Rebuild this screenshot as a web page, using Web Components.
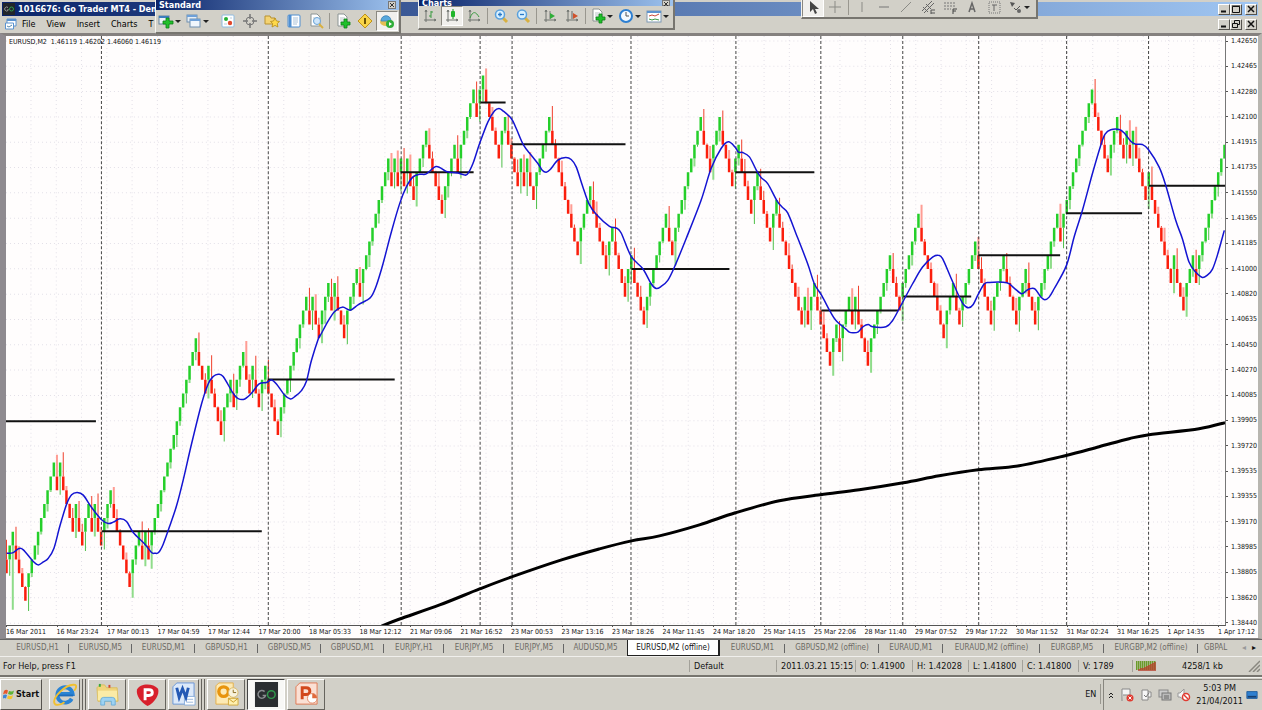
<!DOCTYPE html>
<html lang="en">
<head>
<meta charset="utf-8">
<title>Go Trader MT4</title>
<style>
html,body{margin:0;height:100%}
body{font-family:"DejaVu Sans Condensed","DejaVu Sans",sans-serif;font-size:8px;color:#111;background:#d2d0c8;overflow:hidden}
</style>
</head>
<body>
<trade-desktop></trade-desktop>
<script>
const define = (name, html, setup) => customElements.define(name, class extends HTMLElement {
  constructor() {
    super();
    const t = document.createElement('template');
    t.innerHTML = html;
    this.attachShadow({ mode: 'open' }).append(t.content.cloneNode(true));
  }
  connectedCallback() { if (setup && !this.ready) { this.ready = true; setup(this, this.shadowRoot); } }
});

const DOC = '<path d="M3 1h6l3 3v9H3z" fill="#fff" stroke="#8b9494"/><path d="M5 5h5M5 7h5M5 9h4" stroke="#b9c4c8"/>';
const PLUS = '<path d="M9 6h3v3h3v3h-3v3H9v-3H6V9h3z" fill="#1fc02a" stroke="#0c8216" stroke-width=".8"/>';
const AXES = '<path d="M4 2v12M2 12h12M3 4l1-2 1 2M12 11l2 1-2 1" fill="none" stroke="#6f736f"/>';
const LENS = '<path d="M10 10l4 4" stroke="#d8b040" stroke-width="3"/><circle cx="7" cy="6.5" r="4.5" fill="#d8f0ff" stroke="#5aa0dc" stroke-width="1.5"/>';
const ICONS = {
  newchart: '<rect x="1" y="3" width="10" height="8" fill="#eef4f8" stroke="#67839b"/><path d="M1 4h10" stroke="#3e7fc0" stroke-width="2"/><path d="M8 5h3v3h4v3h-4v4H8v-4H5V8h3z" fill="#22c02c" stroke="#0c8216" stroke-width=".8"/>',
  profiles: '<rect x="1" y="2" width="10" height="7" fill="#e6eef6" stroke="#6f8fb0"/><path d="M1 3h10" stroke="#6ea0d8" stroke-width="2"/><rect x="4" y="6" width="10" height="8" fill="#f0f6fc" stroke="#6f8fb0"/><path d="M4 7h10" stroke="#6ea0d8" stroke-width="2"/>',
  watch: '<rect x="2" y="2" width="12" height="12" rx="1" fill="#fff" stroke="#8ebbe0"/><circle cx="6" cy="6" r="2" fill="#25b035"/><circle cx="10" cy="10" r="2.2" fill="#e0482c"/><path d="M4 11h3M10 5h2" stroke="#bcd"/>',
  target: '<circle cx="8" cy="8" r="4" fill="none" stroke="#777"/><path d="M8 1v5M8 10v5M1 8h5M10 8h5" stroke="#777" stroke-width="1.5"/>',
  favs: '<path d="M1 3h5l1 2h4v6H1z" fill="#f4d372" stroke="#b89230"/><path d="M11 5l1.5 3 3 .5-2.2 2 .6 3.5-2.900-1.600L8 14l.7-3.500-2.200-2 3-.5z" fill="#ffd94a" stroke="#b48a18" stroke-width=".8"/>',
  terminal: '<rect x="2" y="2" width="12" height="12" rx="1" fill="#fff" stroke="#4f8ed0"/><path d="M4 2v12" stroke="#4f8ed0" stroke-width="3"/><path d="M7 5h5M7 7h5M7 9h5M7 11h4" stroke="#a9c1d8"/>',
  tester: DOC + '<circle cx="9" cy="8" r="3.5" fill="#cfe6fa" stroke="#6aa4d8"/><path d="M11 11l4 4" stroke="#d8b040" stroke-width="2"/>',
  order: DOC + PLUS,
  meta: '<path d="M8 1l7 7-7 7-7-7z" fill="#f9d448" stroke="#bf9218"/><path d="M8 5v6" stroke="#6b5206" stroke-width="2"/>',
  expert: '<ellipse cx="7" cy="9" rx="6" ry="4" fill="#e4be52"/><path d="M2 8c0-7 10-7 10 0z" fill="#58a8dc" stroke="#3c80b4" stroke-width=".8"/><circle cx="11" cy="11" r="4" fill="#2fae38"/><path d="M10 9l3 2-3 2z" fill="#fff"/>',
  bars: AXES + '<path d="M9 3v7M7 8h2M9 4h2" stroke="#3a9a40" fill="none"/>',
  candles: AXES + '<path d="M9 1v10" stroke="#168c20"/><rect x="7" y="3" width="4" height="6" rx="1" fill="#1fb52b"/>',
  line: AXES + '<path d="M4 10c3-8 6-6 9-1" stroke="#3a9a40" fill="none"/>',
  zoomin: LENS + '<path d="M5 6.5h4M7 4.5v4" stroke="#2878c8" stroke-width="1.3"/>',
  zoomout: LENS + '<path d="M5 6.5h4" stroke="#2878c8" stroke-width="1.3"/>',
  scroll: AXES + '<path d="M8 3v8" stroke="#777"/><path d="M8 5l5 3-5 3z" fill="#2fae38"/>',
  shift: AXES + '<path d="M8 3v8" stroke="#666"/><path d="M9 5l5 3-5 3z" fill="#d0522c"/>',
  indicator: DOC + PLUS,
  clock: '<circle cx="8" cy="8" r="6" fill="#f4faff" stroke="#2d7fd2" stroke-width="2"/><path d="M8 4v4h3" fill="none" stroke="#555"/>',
  template: '<rect x="1" y="3" width="14" height="11" fill="#fff" stroke="#7c98b4"/><path d="M1 4h14" stroke="#5c94d0" stroke-width="2"/><path d="M3 8l3-1 3 1 4-2" stroke="#c84a3a" fill="none"/><path d="M3 11l3 1 3-1 4 1" stroke="#3a9a40" fill="none"/>',
  cursor: '<path d="M5 2v11l3-3 2 5 2-1-2-4h4z" fill="#444"/>',
  cross: '<path d="M8 2v12M2 8h12" stroke="#8b8b86"/>',
  vline: '<path d="M8 3v10" stroke="#8b8b86"/>',
  hline: '<path d="M3 8h10" stroke="#777"/>',
  trend: '<path d="M3 13L13 3" stroke="#8b8b86"/>',
  channel: '<path d="M2 12L12 2M4 14L14 4M3 8l5 5M6 5l5 5" stroke="#666"/><path d="M11 11h4M11 14h4M11 11v4" stroke="#555"/>',
  fibo: '<path d="M2 4h12M2 7h12M2 10h7" stroke="#777" stroke-dasharray="2 1"/><path d="M11 10h4M11 12h3M11 10v5" stroke="#444"/>',
  text: '<path d="M5 13L8 4l3 9M6 10h4" fill="none" stroke="#666" stroke-width="1.5"/>',
  label: '<rect x="3" y="3" width="11" height="11" fill="none" stroke="#777" stroke-dasharray="1 1"/><path d="M6 6h5M8 6v6" stroke="#666"/>',
  arrows: '<path d="M3 3l5 1-3 4z" fill="#555"/><path d="M7 9l2 2 4-4" fill="none" stroke="#555"/><circle cx="12" cy="12" r="2" fill="#666"/>'
};

/* Floating tool bar: data-items lists icon names; "|" is a divider, "_" a gap, "*" pressed, "+" has a menu */
define('tool-bar', `<style>
:host{display:block;box-sizing:border-box;background:#d2d0c8;border:solid;border-width:0 2px 2px 1px;border-color:#f4f4f0 #77756f #77756f #f4f4f0;overflow:hidden}
header{display:flex;align-items:center;justify-content:space-between;height:10px;padding:0 3px;background:linear-gradient(90deg,#0a246a,#9dc2ee);color:#fff;font:bold 9px/10px "DejaVu Sans Condensed",sans-serif}
header button{width:8px;height:8px;padding:0;border:1px solid #777;background:#d2d0c8;display:grid;place-items:center}
header svg{width:6px;height:6px;fill:none;stroke:#333}
:host([slim]) header{height:6px;line-height:6px}
:host([slim]) header span{line-height:6px}
:host([slim]) header button{height:6px}
:host(:not([caption])) header{display:none}
nav{display:flex;align-items:center}
nav button{display:flex;align-items:center;width:22px;height:20px;padding:0 2px;border:1px solid transparent;background:none}
nav button.menu{width:28px;padding:0 1px}
nav button.on{background:#f1f0ed;border-color:#8a8880 #fff #fff #8a8880}
nav button.menu::after{content:"";border:solid transparent;border-width:3px 3px 0;border-top-color:#222;margin-left:1px}
:host(:not([slim])[caption]) nav{padding-top:1px}
svg{width:16px;height:16px;flex:none}
i{width:1px;height:16px;margin:0 2px;background:#99978f}
i.gap{background:none}
</style><header><span></span><button aria-label="Close"><svg viewBox="0 0 6 6"><path d="M1 1l4 4M5 1L1 5"/></svg></button></header><nav></nav>`, (el, root) => {
  root.querySelector('span').textContent = el.getAttribute('caption') || '';
  root.querySelector('nav').innerHTML = el.dataset.items.split(' ').map(t => {
    if (t === '|') return '<i></i>';
    if (t === '_') return '<i class="gap"></i>';
    const key = t.replace(/[*+]/, '');
    return `<button class="${t.includes('*') ? 'on' : ''} ${t.includes('+') ? 'menu' : ''}" aria-label="${key}"><svg viewBox="0 0 16 16">${ICONS[key]}</svg></button>`;
  }).join('');
});

define('window-buttons', `<style>
:host{display:flex;margin-left:auto;margin-right:5px}
button{width:12px;height:11px;padding:0;border:1px solid;border-color:#fff #55534e #55534e #fff;background:#d2d0c8;display:grid;place-items:center}
button:last-child{margin-left:3px}
svg{width:8px;height:8px;fill:none;stroke:#111}
</style>
<button aria-label="Minimize"><svg viewBox="0 0 8 8"><path d="M1 6.5h5" stroke-width="2"/></svg></button>
<button aria-label="Maximize"><svg viewBox="0 0 8 8"><path class="box" d="M.5 1.5h7v6h-7zM0 1h8"/></svg></button>
<button aria-label="Close"><svg viewBox="0 0 8 8"><path d="M1 1l6 6M7 1L1 7" stroke-width="1.5"/></svg></button>`, (el, root) => {
  if (el.hasAttribute('restore')) root.querySelector('.box').setAttribute('d', 'M2.5 3V.5h5v4H6M.5 3.5h5v4h-5z');
});

define('price-chart', `<style>
:host{display:grid;grid-template-columns:1fr 32px;grid-template-rows:1fr 12px;background:#fffdfd;border:solid #85817f;border-width:3px 4px 1px 6px;border-left-color:#8f8b90;border-right-color:#b8b6b0;min-height:0;position:relative}
.plot{width:100%;height:100%;min-height:0;box-sizing:border-box;border-right:1px solid #777;border-bottom:1px solid #555;display:block;overflow:hidden}
.plot svg{display:block;width:100%;height:100%}
.quote{position:absolute;left:3px;top:1px;font-size:7px;line-height:11px;white-space:pre}
ol{list-style:none;margin:0;padding:0;font-size:7px;line-height:10px}
.prices{display:flex;flex-direction:column;justify-content:space-between;margin-bottom:-2px}
.prices li{display:flex;align-items:center}
.prices li::before{content:"";width:2px;height:1px;background:#555;margin-right:3px}
.times{grid-column:1/-1;display:grid;grid-template-columns:repeat(24,minmax(0,1fr)) 40px;white-space:nowrap;line-height:11px}
.times li::before{content:"";display:block;width:1px;height:2px;background:#555}
.times li{margin-top:-1px}
</style>
<div class="plot"><svg viewBox="0 0 1220 588" preserveAspectRatio="none"></svg></div>
<ol class="prices"></ol><ol class="times"></ol>
<span class="quote">EURUSD,M2  1.46119 1.46202 1.46060 1.46119</span>`, (el, root) => {
  const li = a => a.split(',').map(t => `<li>${t}</li>`).join('');
  root.querySelector('.prices').innerHTML = li('1.42650,1.42465,1.42280,1.42100,1.41915,1.41735,1.41550,1.41365,1.41185,1.41000,1.40820,1.40635,1.40450,1.40270,1.40085,1.39905,1.39720,1.39535,1.39355,1.39170,1.38985,1.38805,1.38620,1.38440');
  root.querySelector('.times').innerHTML = li('16 Mar 2011,16 Mar 23:24,17 Mar 00:13,17 Mar 04:59,17 Mar 12:44,17 Mar 20:00,18 Mar 05:33,18 Mar 12:12,21 Mar 09:06,21 Mar 16:52,23 Mar 00:53,23 Mar 13:16,23 Mar 18:26,24 Mar 11:45,24 Mar 18:20,25 Mar 14:15,25 Mar 22:06,28 Mar 11:40,29 Mar 07:52,29 Mar 17:22,30 Mar 11:52,31 Mar 02:24,31 Mar 16:25,1 Apr 14:35,1 Apr 17:12');

  // Successive highs and lows of the price, in bricks of 0.001 above 1.38
  const turns = [10,8,11,6,16,14,16,11,13,10,13,11,13,10,14,7,11,9,11,9,25,21,23,18,22,20,24,21,23,20,23,18,28,26,28,25,29,27,29,25,30,28,38,36,38,36,38,36,38,35,40,34,39,37,43,41,44,38,41,36,38,36,38,35,41,31,36,30,33,28,31,26,34,31,41,37,41,36,39,34,37,32,35,26,28,26,29,23,26,24,28,26,28,23,31,27,34,25,29,26,32,26,31,26,30,26,34,32,43,37,41,38,40,38,40,35,37,29,31,27,31,29,39];
  const bricks = [];
  for (let i = 1; i < turns.length; i++) {
    const from = turns[i - 1], to = turns[i], up = to > from;
    for (let k = 1; k < Math.abs(to - from); k++)
      bricks.push({ up, top: up ? from + k + 1 : from - k, first: k === 1 });
  }
  const Y = n => 682.7 - 13.8 * n;
  const pitch = 1219 / (bricks.length - 1);
  let grid = '', out = '';
  for (let x = 31; x < 1226; x += 25.3) grid += `M${x.toFixed(1)} 36V624`;
  for (let y = 41; y < 624; y += 25.27) grid += `M6 ${y.toFixed(1)}H1226`;
  out += `<path d="${grid}" stroke="#e3e0e8" stroke-width="1" stroke-dasharray="1 3" fill="none"/>`;
  const body = { true: '', false: '' }, dark = { true: '', false: '' }, pale = { true: '', false: '' };
  bricks.forEach((b, i) => {
    const x = 6.5 + i * pitch, t = Y(b.top), h = 13.8;
    const r = ((i * 7919 + 331) % 97) / 97;
    let w = r * r * 14;
    if (b.first) w = 13.8 + 2 + r * 9;
    if (i === 2) w = 64;
    body[b.up] += `M${x.toFixed(1)} ${t.toFixed(1)}v${h}`;
    const set = (i % 3 === 0 || b.first && i % 2) ? dark : pale;
    set[b.up] += b.up ? `M${x.toFixed(1)} ${(t + h).toFixed(1)}v${w.toFixed(1)}` : `M${x.toFixed(1)} ${t.toFixed(1)}v${(-w).toFixed(1)}`;
  });
  const p = (d, c, w, extra = '') => `<path d="${d}" stroke="${c}" stroke-width="${w}" fill="none" ${extra}/>`;
  out += p(pale.true, '#8fdc8a', 2) + p(pale.false, '#ff9d94', 2) + p(dark.true, '#4fc04a', 1) + p(dark.false, '#f0402c', 1);
  out += p(body.true, '#25cf2a', 2.5) + p(body.false, '#fb1e0c', 2.5);
  out += p([101,268,401,480,512,631,736,821,903,979,1067,1149].map(x => `M${x + .5} 36V624`).join(''), '#444', 1, 'stroke-dasharray="3 2"');
  out += p('M6 420.5H96M102 530.5H262M268 379H395M401 172H474M481 102.5H506M512 144H626M632 268.5H730M736 172H815M822 310H899M904 296H972M979 255H1061M1067 213H1143M1150 185.5H1226', '#111', 2);

  const smooth = pts => pts.map(([x, y], i) => {
    if (!i) return `M${x} ${y}`;
    const a = pts[i - 2] || pts[i - 1], b = pts[i - 1], d = pts[i + 1] || pts[i];
    return `C${[b[0] + (x - a[0]) / 6, b[1] + (y - a[1]) / 6, x - (d[0] - b[0]) / 6, y - (d[1] - b[1]) / 6, x, y].map(v => v.toFixed(2)).join(' ')}`;
  }).join('');
  // Fast average: each stretch has an origin, then points in thirds of a unit from it
  const stretches = [
    [0, 320, '20,697 38,696 57,683 70,687 100,722 115,732 130,723 145,712 162,682 180,615 200,550 215,522 232,515 250,523 275,560 305,597 325,608 340,604 360,594 380,602 400,635 435,670 455,695 465,697 476,695 490,670 508,620 530,555 550,478 575,370 605,250 625,190 640,168 655,161 670,168 700,218 715,234 735,235 755,218 778,190 800,186 815,178 830,190 855,224 872,235 885,228 905,210 920,182 935,120 958,48'],
    [320, 50, '0,858 25,812 45,783 68,770 92,779 115,763 140,750 155,738 170,705 190,640 215,545 240,460 260,410 280,380 300,372 320,371 350,349 380,364 400,367 415,368 430,373 443,372 460,340 480,280 505,215 525,182 538,175 550,182 575,205 590,235 612,285 635,315 655,340 668,360 680,366 692,358 715,330 738,322 755,328 770,350 790,410 808,460 830,492 870,528 890,533 905,548 935,618 970,655 995,700 1010,714 1025,708 1045,690 1065,650 1100,565 1145,450 1175,355 1205,295'],
    [660, 90, '207,155 228,172 237,186 250,187 270,200 290,238 305,262 325,280 352,330 368,350 385,368 410,430 445,520 465,580 487,615 512,662 530,690 560,716 570,725 582,727 597,724 612,708 627,702 640,709 680,709 700,690 725,645 760,580 790,530 820,500 838,495 850,505 875,562'],
    [960, 60, '0,709 13,732 28,742 42,732 57,702 75,671 90,666 143,667 165,683 187,700 200,692 212,685 228,686 245,710 257,718 270,710 285,685 322,615 345,530 370,450 400,340 425,255 438,222 455,209 480,208 495,218 515,243 530,252 550,253 568,268 600,320 620,375 650,480 670,535 690,605 710,635 730,651 745,644 760,627 775,585 796,510']
  ];
  const fast = stretches.flatMap(([ox, oy, s]) => s.split(' ').map(q => { const [x, y] = q.split(',').map(Number); return [ox + x / 3, oy + y / 3]; }));
  out += p(smooth(fast), '#1414d2', 1.5);
  const slow = [[382,625],[400,618],[440,604],[480,588],[512,576],[562,559],[600,548],[632,540],[660,535],[700,524],[736,512],[780,500],[821,494],[860,489],[904,482],[940,475],[979,469],[1020,465],[1066,455],[1100,446],[1130,438],[1150,434],[1200,428],[1226,422]];
  out += p(smooth(slow), '#000', 3);
  root.querySelector('svg').innerHTML = `<g transform="translate(-6 -36)">${out}</g>`;
});

define('chart-tabs', `<style>
:host{display:block;border-top:1px solid #666;background:#d2d0c8;position:relative;overflow:hidden}
nav{display:grid;grid-template-columns:repeat(6,63px) repeat(3,60px) 63px 93px 65px 94px 64px 97px 64px 94px 32px;margin-left:5px;padding-left:1px;height:16px}
a{color:#6d6b65;text-decoration:none;text-align:center;line-height:15px;white-space:nowrap;overflow:hidden;position:relative}
a:not(.on)::after{content:"";position:absolute;right:0;top:4px;height:9px;width:1px;background:#666}
a.cut{text-align:left;padding-left:6px}
a.cut::after,a.pre::after{display:none}
a.on{background:#fff;color:#111;border:solid #222;border-width:0 2px 1px 1px}
span{position:absolute;right:6px;top:0;line-height:15px;display:flex;gap:6px}
button{border:0;padding:0;background:none;font-size:8px;line-height:15px;color:#999}
button+button{color:#111}
</style><nav></nav><span><button aria-label="Scroll left">◂</button><button aria-label="Scroll right">▸</button></span>`, (el, root) => {
  const names = 'EURUSD,H1;EURUSD,M5;EURUSD,M1;GBPUSD,H1;GBPUSD,M5;GBPUSD,M1;EURJPY,H1;EURJPY,M5;EURJPY,M5;AUDUSD,M5;EURUSD,M2 (offline);EURUSD,M1;GBPUSD,M2 (offline);EURAUD,M1;EURAUD,M2 (offline);EURGBP,M5;EURGBP,M2 (offline);GBPAL'.split(';');
  root.querySelector('nav').innerHTML = names.map((n, i) => `<a href="#${i}" class="${i === 10 ? 'on' : i === 9 ? 'pre' : i === 17 ? 'cut' : ''}">${n}</a>`).join('');
});

define('status-bar', `<style>
:host{display:grid;grid-template-columns:1fr 87px 79px 57px 56px 54px 56px 54px 130px;align-items:center;height:18px;border-top:1px solid #f0efec;border-bottom:2px solid #77756f;background:#d2d0c8;font-size:9px}
span{padding-left:4px;border-left:1px solid #a3a19a;line-height:12px;white-space:nowrap}
span:first-of-type{border:0;padding-left:3px}
span:last-child{display:flex;align-items:center;padding-left:3px}
svg{width:20px;height:10px;margin-right:26px}
svg.grip{width:12px;height:12px;margin:0 2px 0 auto}
</style><span>For Help, press F1</span><span>Default</span><span>2011.03.21 15:15</span><span>O: 1.41900</span><span>H: 1.42028</span><span>L: 1.41800</span><span>C: 1.41800</span><span>V: 1789</span>
<span><svg viewBox="0 0 20 10"><path d="M0 4.5h20" stroke="#6a9a2a" stroke-width="9" stroke-dasharray="1.5 .5"/><path d="M3 10V8M5 10V7M7 10V7M9 10V6M11 10V5M13 10V4M15 10V3M17 10V2M19 10V1" stroke="#b8402c" stroke-width="1.5"/></svg>4258/1 kb<svg class="grip" viewBox="0 0 12 12"><path d="M1 12L12 1M5 12l7-7M9 12l3-3" stroke="#8a8880" stroke-width="1.5"/></svg></span>`);

define('task-button', `<style>
:host{display:block;width:38px}
:host([grouped]){width:37px}
button{box-sizing:border-box;width:100%;height:31px;padding:0;display:grid;place-items:center;background:#d2d0c8;border:1px solid;border-color:#fff #66645e #66645e #fff}
:host([grouped]) button{width:31px;box-shadow:2px 0 #d2d0c8,3px 0 #66645e,5px 0 #d2d0c8,6px 0 #66645e}
:host([active]) button{background:#f8f8f6;border-color:#444 #fff #fff #444}
</style><button><slot></slot></button>`, (el, root) => root.querySelector('button').setAttribute('aria-label', el.getAttribute('label')));

define('task-bar', `<style>
:host{display:flex;align-items:center;height:33px;border-top:1px solid #f4f4f0;background:#d2d0c8;box-sizing:border-box}
svg{display:block;width:25px;height:25px}
.start{box-sizing:border-box;width:42px;height:31px;padding:0 0 0 2px;margin-right:7px;border:1px solid;border-color:#fff #55534e #55534e #fff;background:#d2d0c8;display:flex;align-items:center;font:bold 9px "DejaVu Sans Condensed",sans-serif;color:#111}
.start svg{width:12px;height:12px;margin-right:1px}
nav{display:flex;gap:2px}
.lang{margin-left:auto;font-size:9px;padding-right:4px;border-right:1px solid #99978f;line-height:20px}
.tray{display:flex;align-items:center;height:31px;box-sizing:border-box;margin-left:2px;border:solid;border-width:1px 0 0 1px;border-color:#88867f;padding:0 4px 0 4px;gap:5px}
.tray svg{width:14px;height:14px}
.tray svg.up{width:6px;height:8px;margin-right:1px}
.tray svg.desk{width:12px;margin-left:-2px}
time{font-size:9px;line-height:13px;text-align:center;white-space:nowrap}
</style>
<button class="start"><svg viewBox="0 0 12 12"><path d="M1 3q2-2 4-.5L4 6Q2 5 0 6.5z" fill="#e8582c"/><path d="M6 3q3 1 5-.5L10 6q-2 1.5-5 0z" fill="#5fb336"/><path d="M0 7.5q2-1.500 4-.5L3 10.5q-2-1-4 .5z" fill="#3d86d8"/><path d="M5 7.5q3 1 5-.5L9 10.5q-2 1.5-5 0z" fill="#f4c52c"/></svg>Start</button>
<nav>
<task-button grouped label="Internet Explorer"><svg viewBox="0 0 26 26"><path d="M20.5 17.5a8 8 0 1 1 1-5H7" fill="none" stroke="#2a84d4" stroke-width="4"/><path d="M6 14h16" stroke="#1f6cba" stroke-width="2"/><path d="M3 23C-1 17 15 1 24 3c2 1 1 4-1 6M3 23c3 2 7 0 10-2" fill="none" stroke="#f0c030" stroke-width="2"/></svg></task-button>
<task-button label="Explorer"><svg viewBox="0 0 26 26"><path d="M2 6l3-3h5l2 3h11l1 14H3z" fill="#f0d47c" stroke="#d9bd60"/><path d="M3 9h20v10H3z" fill="#fbeba6"/><path d="M5 2v3" stroke="#37a83c" stroke-width="2"/><path d="M15 3v3" stroke="#d2462c" stroke-width="2"/><path d="M6 24v-5q0-3 3-3h9q3 0 3 3v5h-4v-4h-7v4z" fill="#9cd2f2" stroke="#6cb0dc"/></svg></task-button>
<task-button label="Player"><svg viewBox="0 0 26 26"><path d="M2 8C5 1 19 1 24 7c2 6-4 15-11 18C6 21 1 14 2 8z" fill="#d8202c"/><path d="M10.5 19V8h4q3.500 0 3.500 3t-3.500 3h-4" fill="none" stroke="#fff" stroke-width="3"/></svg></task-button>
<task-button grouped label="Word"><svg viewBox="0 0 26 26"><path d="M6 1h18v22H2V5z" fill="#dce9f9" stroke="#6b98d8"/><path d="M14 15h11v9H14z" fill="#fff" stroke="#8ab0dc"/><path d="M16 18h7M16 21h7" stroke="#9ab8dc"/><path d="M6 6l2.500 10L12 7l3.500 9L18 6" fill="none" stroke="#2459b4" stroke-width="3"/></svg></task-button>
<task-button label="Outlook"><svg viewBox="0 0 26 26"><path d="M5 1h15v22H2V4z" fill="#fdeab4" stroke="#e4b04c"/><circle cx="10" cy="10" r="5" fill="none" stroke="#e8940c" stroke-width="3.500"/><circle cx="20" cy="11" r="5" fill="#f8f2dc" stroke="#d8b868"/><path d="M20 8v3h3" fill="none" stroke="#8a6a20"/><path d="M15 17h10v7H15z" fill="#fff0b0" stroke="#d2aa40"/><path d="M15 17l5 4 5-4" fill="none" stroke="#c99a28"/></svg></task-button>
<task-button active label="Go Trader"><svg viewBox="0 0 26 26"><path d="M1 0h24v26H1z" fill="#2b2e31"/><path d="M11 10a4 4 0 1 0 1 4H9" fill="none" stroke="#8a8d90" stroke-width="1.5"/><circle cx="18" cy="13" r="4" fill="none" stroke="#2f9a4c" stroke-width="1.5"/></svg></task-button>
<task-button label="PowerPoint"><svg viewBox="0 0 26 26"><path d="M6 1h18v22H2V5z" fill="#fbe0d4" stroke="#e07a54"/><path d="M8.5 18V6h4q4 0 4 3.500t-4 3.500h-4" fill="none" stroke="#d2481c" stroke-width="3"/><circle cx="19" cy="17" r="5" fill="#fff" stroke="#e08a68"/><path d="M19 12v5h5a5 5 0 0 0-5-5z" fill="#e06a3c"/></svg></task-button>
</nav>
<span class="lang">EN</span>
<div class="tray">
<svg class="up" viewBox="0 0 6 8"><path d="M1 4l2-2 2 2M1 7l2-2 2 2" fill="none" stroke="#222"/></svg>
<svg viewBox="0 0 14 14"><path d="M2 13V1h8v6H3" fill="#f4f4f4" stroke="#888"/><circle cx="10" cy="10" r="3.5" fill="#e03a30"/><path d="M8.5 8.5l3 3M11.5 8.5l-3 3" stroke="#fff"/></svg>
<svg viewBox="0 0 14 14"><path d="M3 2h6v10H3zM9 4h3v5H9" fill="#f6f6f6" stroke="#888"/><path d="M5 7l2 2 3-4" fill="none" stroke="#777"/></svg>
<svg viewBox="0 0 14 14"><rect x="1" y="2" width="9" height="7" fill="#ccc" stroke="#888"/><rect x="4" y="5" width="9" height="7" fill="#bbb" stroke="#777"/><path d="M6 8h5M6 10h5" stroke="#666"/></svg>
<svg viewBox="0 0 14 14"><path d="M1 5h2l4-4v11L3 9H1z" fill="#f4f4f4" stroke="#999"/><circle cx="9" cy="9" r="3.5" fill="#fff" stroke="#e03a30" stroke-width="1.5"/><path d="M7 7l4 4" stroke="#e03a30" stroke-width="1.5"/></svg>
<time>5:03 PM<br>21/04/2011</time>
<svg class="desk" viewBox="0 0 14 14"><path d="M1 3h12v8H1z" fill="#2f7fd0" stroke="#1c5a9c"/><path d="M2 9h10" stroke="#173f70" stroke-width="2"/></svg>
</div>`);

define('trade-desktop', `<style>
:host{display:flex;flex-direction:column;height:100vh;position:relative;overflow:hidden}
.title{display:flex;align-items:center;height:14px;margin:2px 4px 0 2px;background:linear-gradient(90deg,#0a246a,#a0c6f2);color:#fff;font-size:9px;line-height:14px;font-weight:bold;white-space:nowrap}
.title svg{width:12px;height:12px;margin:0 3px 0 1px}
.menu{display:flex;align-items:center;height:16px;margin:0 4px 1px 2px}
.menu svg{width:12px;height:12px;margin:0 5px 0 3px}
.menu button{border:0;background:none;padding:0;font:inherit;font-size:9px;margin-right:11px}
.menu window-buttons,.title window-buttons{margin-right:1px}
price-chart{flex:1}
chart-tabs,status-bar,task-bar{flex:none}
tool-bar{position:absolute}
.std{left:155px;top:0;width:246px;height:34px}
.charts{left:418px;top:0;width:257px;height:30px}
.draw{left:801px;top:-3px;width:237px;height:22px}
</style>
<header class="title"><svg viewBox="0 0 12 12"><path d="M0 0h12v12H0z" fill="#22262a"/><path d="M5 4.5a2 2 0 1 0 0 3V6" fill="none" stroke="#999"/><circle cx="8.5" cy="6" r="2" fill="none" stroke="#2f9a4c"/></svg>1016676: Go Trader MT4 - Dem<window-buttons></window-buttons></header>
<nav class="menu"><svg viewBox="0 0 12 12"><path d="M2 1h9v7H2z" fill="#fff" stroke="#5c94d0"/><path d="M2 2h9" stroke="#5c94d0" stroke-width="2"/><path d="M.5 5h8v6h-8z" fill="#fff" stroke="#5c94d0"/><path d="M2 8l2 1 3-2" fill="none" stroke="#58a"/></svg><button>File</button><button>View</button><button>Insert</button><button>Charts</button><button>T</button><window-buttons restore></window-buttons></nav>
<price-chart></price-chart>
<chart-tabs></chart-tabs>
<status-bar></status-bar>
<task-bar></task-bar>
<tool-bar class="std" caption="Standard" data-items="newchart+ profiles+ _ watch target favs terminal tester | order meta expert*"></tool-bar>
<tool-bar class="charts" slim caption="Charts" data-items="bars candles* line | zoomin zoomout | scroll shift | indicator+ clock+ template+"></tool-bar>
<tool-bar class="draw" data-items="cursor* cross | vline hline trend channel fibo text label arrows+"></tool-bar>`);
</script>
</body>
</html>
